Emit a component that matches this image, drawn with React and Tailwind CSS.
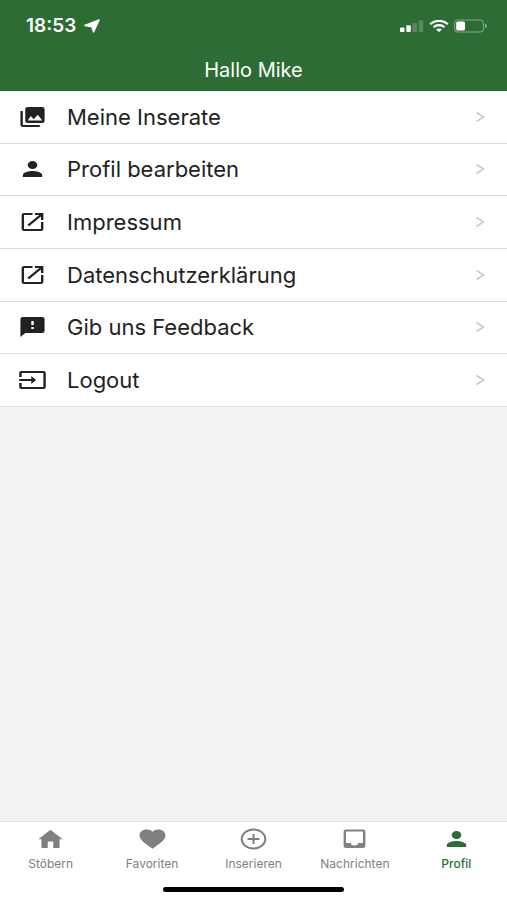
import React, { useState } from 'react';
import { MdPerson, MdOpenInNew, MdFeedback, MdInput } from 'react-icons/md';

function GalleryIcon(props) {
  return (
    <svg viewBox="0 0 24 24" fill="currentColor" {...props}>
      <path d="M22 16V4a2 2 0 0 0-2-2H8a2 2 0 0 0-2 2v12a2 2 0 0 0 2 2h12a2 2 0 0 0 2-2M8 15.600l2.600-4.600 2.400 3.200 3.400-4.400L20 15.600zM2 6v14a2 2 0 0 0 2 2h14v-2H4V6" />
    </svg>
  );
}

function HomeIcon(props) {
  return (
    <svg viewBox="0 0 24 24" fill="currentColor" {...props}>
      <path d="M12 2.800 2 12.200h2.500V21h5.200v-6.500h4.600V21h5.200v-8.800H22L12 2.800z" />
    </svg>
  );
}

function HeartIcon(props) {
  return (
    <svg viewBox="0 0 24 24" fill="currentColor" {...props}>
      <path d="M12 21.800 10.500 20.500C4.500 15.300 1.300 12.400 1.300 8.300 1.300 5 3.900 2.600 7.200 2.600c1.900 0 3.700.9 4.800 2.200 1.100-1.300 2.900-2.200 4.800-2.200 3.300 0 5.900 2.400 5.900 5.700 0 4.100-3.200 7-9.200 12.200z" />
    </svg>
  );
}

function AddIcon(props) {
  return (
    <svg viewBox="0 0 29 24" fill="none" stroke="currentColor" strokeWidth="2" {...props}>
      <ellipse cx="14.500" cy="12" rx="11.800" ry="9.600" />
      <path d="M14.500 7v10M8.500 12h12" />
    </svg>
  );
}

function InboxIcon(props) {
  return (
    <svg viewBox="0 0 24 24" fill="currentColor" {...props}>
      <path d="M19 2.500H5a2 2 0 0 0-2 2V19a2 2 0 0 0 2 2h14a2 2 0 0 0 2-2V4.500a2 2 0 0 0-2-2zm0 13.500h-4a3 2.500 0 0 1-6 0H5V4.500h14V16z" />
    </svg>
  );
}

const menu = [
  { label: 'Meine Inserate', Icon: GalleryIcon },
  { label: 'Profil bearbeiten', Icon: MdPerson },
  { label: 'Impressum', Icon: MdOpenInNew },
  { label: 'Datenschutzerklärung', Icon: MdOpenInNew },
  { label: 'Gib uns Feedback', Icon: MdFeedback },
  { label: 'Logout', Icon: MdInput },
];

const tabs = [
  { label: 'Stöbern', Icon: HomeIcon },
  { label: 'Favoriten', Icon: HeartIcon },
  { label: 'Inserieren', Icon: AddIcon },
  { label: 'Nachrichten', Icon: InboxIcon },
  { label: 'Profil', Icon: MdPerson },
];

function StatusBar() {
  return (
    <div className="flex items-center justify-between h-[52px] pl-[26px] pr-5">
      <div className="flex items-center gap-2">
        <span className="text-[19px] leading-6 font-semibold">18:53</span>
        <svg className="w-4 h-[14px]" viewBox="0 0 16 14" fill="currentColor">
          <path d="M15 1 9.500 12.800 8 7.800 1 6.500z" stroke="currentColor" strokeWidth="1.600" strokeLinejoin="round" />
        </svg>
      </div>
      <div className="flex items-center gap-[5px]">
        <svg className="w-6 h-3" viewBox="0 0 24 12" fill="currentColor">
          <rect x="0" y="7.500" width="4.500" height="4.500" rx="1" />
          <rect x="6.300" y="5.300" width="4.500" height="6.700" rx="1" />
          <rect x="12.500" y="2.800" width="4.500" height="9.200" rx="1" opacity=".2" />
          <rect x="18.700" y="0" width="4.500" height="12" rx="1" opacity=".2" />
        </svg>
        <svg className="w-5 h-3" viewBox="0 0 20 12" fill="none" stroke="currentColor" strokeWidth="2.200">
          <path d="M1.200 4.200C6-.3 14-.3 18.800 4.200" />
          <path d="M4.500 7.300c3-2.900 8-2.900 11 0" />
          <path d="M7 9.600c1.600-1.600 4.400-1.600 6 0L10 12z" fill="currentColor" stroke="none" />
        </svg>
        <svg className="w-[33px] h-[14px]" viewBox="0 0 33 14" fill="currentColor">
          <rect x=".6" y="1" width="28.800" height="12" rx="3" fill="none" stroke="currentColor" opacity=".4" />
          <rect x="2.200" y="2.500" width="8.800" height="9" rx="1.500" />
          <path d="M31 5c2.300.6 2.300 3.400 0 4z" opacity=".5" />
        </svg>
      </div>
    </div>
  );
}

export default function App() {
  const [activeTab, setActiveTab] = useState('Profil');

  return (
    <div className="min-h-screen flex flex-col bg-[#f2f2f2] font-['Inter',sans-serif]">
      {/* Header */}
      <header className="bg-[#2d6c34] text-white h-[91px]">
        <StatusBar />
        <h1 className="text-center text-[20px] leading-9 font-normal">Hallo Mike</h1>
      </header>

      {/* Menu */}
      <main className="flex-1">
        <ul className="grid grid-rows-6 h-[316px]">
          {menu.map(({ label, Icon }) => (
            <li key={label} className="border-b border-[#dedede] bg-white">
              <button type="button" className="flex items-center w-full h-full pl-[18px] pr-[22px] text-left text-[#222222]">
                <Icon className="w-[29px] h-6 shrink-0" preserveAspectRatio="none" />
                <span className="flex-1 pl-5 text-[22px] leading-7">{label}</span>
                <svg className="w-[10px] h-3" viewBox="0 0 10 12" fill="none" stroke="#c9c9cb" strokeWidth="1.600">
                  <path d="M1.500 1.500 8.500 6l-7 4.500" />
                </svg>
              </button>
            </li>
          ))}
        </ul>
      </main>

      {/* Tab bar */}
      <footer className="bg-white border-t border-[#e4e4e4]">
        <nav className="grid grid-cols-5 h-[60px] pt-[5px]">
          {tabs.map(({ label, Icon }) => (
            <button
              key={label}
              type="button"
              onClick={() => setActiveTab(label)}
              className={`flex flex-col items-center gap-[5px] ${activeTab === label ? 'text-[#2d6c34] font-medium' : 'text-[#808080]'}`}
            >
              <Icon className="w-[29px] h-6" preserveAspectRatio="none" />
              <span className="text-[12px] leading-4">{label}</span>
            </button>
          ))}
        </nav>
        <div className="flex justify-center pt-[5px] pb-2">
          <div className="w-[181px] h-[5px] rounded-full bg-black"></div>
        </div>
      </footer>
    </div>
  );
}
